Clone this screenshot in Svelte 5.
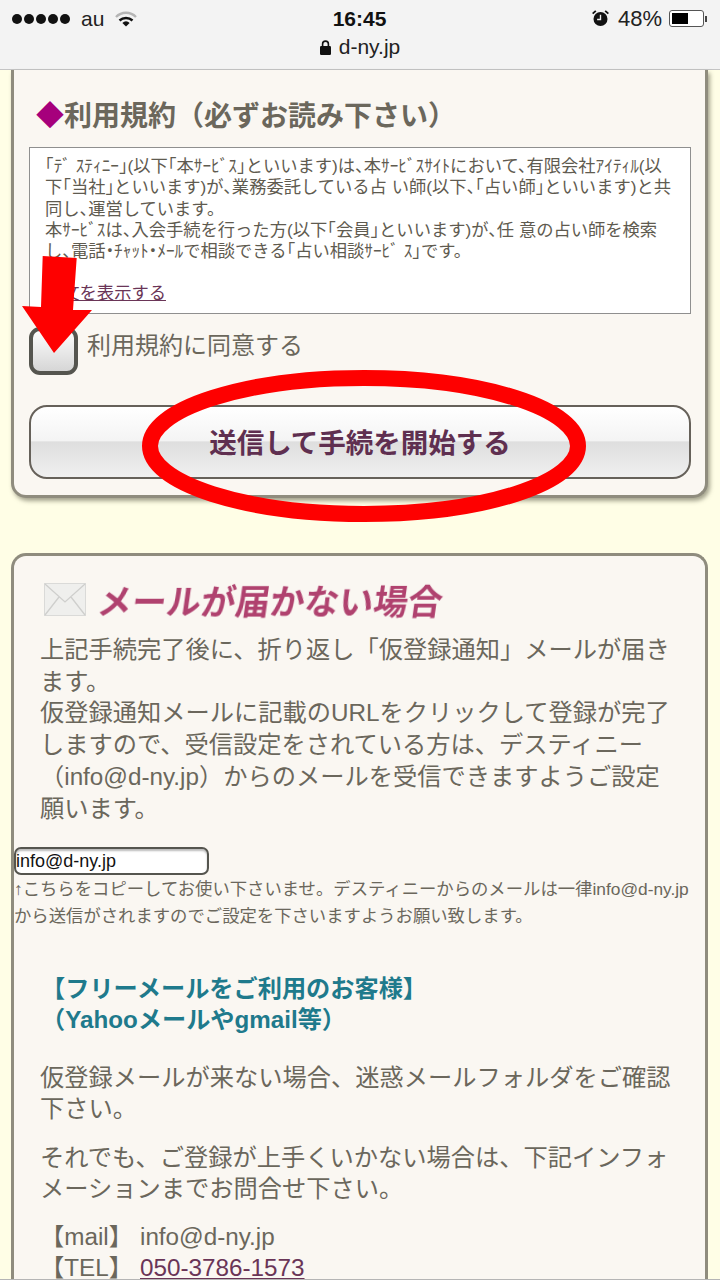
<script>
  const terms = [
    '「ﾃﾞ ｽﾃｨﾆｰ」(以下「本ｻｰﾋﾞｽ」といいます)は、本ｻｰﾋﾞｽｻｲﾄにおいて、有限会社ｱｲﾃｨﾙ(以',
    '下「当社」といいます)が、業務委託している占 い師(以下、「占い師」といいます)と共',
    '同し、運営しています。',
    '本ｻｰﾋﾞｽは、入会手続を行った方(以下「会員」といいます)が、任 意の占い師を検索',
    'し、電話・ﾁｬｯﾄ・ﾒｰﾙで相談できる「占い相談ｻｰﾋﾞ ｽ」です。'
  ]
  const intro = [
    '上記手続完了後に、折り返し「仮登録通知」メールが届き',
    'ます。',
    '仮登録通知メールに記載のURLをクリックして登録が完了',
    'しますので、受信設定をされている方は、デスティニー',
    '（info@d-ny.jp）からのメールを受信できますようご設定',
    '願います。'
  ]
</script>

<div class="screen">
  <header class="topbar">
    <div class="status">
      <div class="left">
        <span class="dots">{#each [1, 2, 3, 4, 5] as d}<i></i>{/each}</span>
        <span class="carrier">au</span>
        <svg class="wifi" width="22" height="16" viewBox="0 0 22 16">
          <path d="M1 6a14 14 0 0 1 20 0" fill="none" stroke="#b5b5b5" stroke-width="2.4" />
          <path d="M4.5 9.5a9.5 9.5 0 0 1 13 0" fill="none" stroke="#111" stroke-width="2.4" />
          <path d="M11 15.5l-3.6-3.6a5 5 0 0 1 7.2 0z" fill="#111" />
        </svg>
      </div>
      <span class="time">16:45</span>
      <div class="right">
        <svg width="17" height="17" viewBox="0 0 16 16">
          <circle cx="8" cy="8.5" r="6.6" fill="#111" />
          <path d="M8 4.5v4.4H4.8" fill="none" stroke="#eee" stroke-width="1.3" />
          <path d="M0.6 3.4l3-2.6M15.4 3.4l-3-2.6" stroke="#111" stroke-width="1.8" />
        </svg>
        <span class="pct">48%</span>
        <span class="battery"><b></b></span>
        <span class="nub"></span>
      </div>
    </div>
    <div class="url">
      <svg width="11" height="15" viewBox="0 0 11 15">
        <rect x="0" y="6" width="11" height="9" rx="1.2" fill="#111" />
        <path d="M2.6 6.5V4a2.9 2.9 0 0 1 5.8 0v2.5" fill="none" stroke="#111" stroke-width="1.6" />
      </svg>
      <span>d-ny.jp</span>
    </div>
  </header>

  <section class="card first">
    <h2 class="terms-title"><span class="diamond">◆</span>利用規約（必ずお読み下さい）</h2>
    <div class="terms-box">
      {#each terms as line}<div>{line}</div>{/each}
      <div class="blank"></div>
      <a href="#terms">全文を表示する</a>
    </div>
    <label class="agree">
      <span class="check"></span>
      <span class="agree-text">利用規約に同意する</span>
    </label>
    <button class="submit">送信して手続を開始する</button>
  </section>

  <section class="card second">
    <div class="mail-title">
      <svg width="42" height="33" viewBox="0 0 42 33">
        <rect x="0.5" y="0.5" width="41" height="32" fill="#efefed" stroke="#dadad8" />
        <path d="M1 1l20 18L41 1M1 32l14-18M41 32L27 14" fill="none" stroke="#cfcfcd" stroke-width="1.3" />
      </svg>
      <span>メールが届かない場合</span>
    </div>
    <div class="body-text intro">
      {#each intro as line}<div>{line}</div>{/each}
    </div>
    <div class="copy-field">info@d-ny.jp</div>
    <p class="copy-note">↑こちらをコピーしてお使い下さいませ。デスティニーからのメールは一律info@d-ny.jp<br />から送信がされますのでご設定を下さいますようお願い致します。</p>
    <h3 class="free-mail">【フリーメールをご利用のお客様】<br />（Yahooメールやgmail等）</h3>
    <p class="body-text para">仮登録メールが来ない場合、迷惑メールフォルダをご確認<br />下さい。</p>
    <p class="body-text para">それでも、ご登録が上手くいかない場合は、下記インフォ<br />メーションまでお問合せ下さい。</p>
    <div class="body-text contact">
      <span>【mail】</span><span>info@d-ny.jp</span>
      <span>【TEL】</span><a href="#tel">050-3786-1573</a>
    </div>
  </section>

  <div class="bottom-edge"></div>

  <!-- hand drawn annotations on top of the screenshot -->
  <svg class="marks" width="720" height="1280" viewBox="0 0 720 1280">
    <ellipse cx="364" cy="446" rx="214" ry="68" fill="none" stroke="#fe0000" stroke-width="16" />
    <path d="M42.7 256L76.7 258L73 310H92L54 353L22 306L41 307z" fill="#fe0000" />
  </svg>
</div>

<style>
  :global(body) {
    margin: 0;
    background: #fffee6;
  }

  .screen {
    position: relative;
    width: 720px;
    height: 1280px;
    overflow: hidden;
    background: #fffee6;
    font-family: "Liberation Sans", "Noto Sans CJK JP", sans-serif;
    color: #6b675c;
  }

  .topbar {
    height: 69px;
    background: #f3f3f3;
    border-bottom: 1px solid #c4c4c4;
    color: #111;
  }

  .status {
    display: grid;
    grid-template-columns: 1fr auto 1fr;
    align-items: center;
    height: 37px;
    padding: 0 13px 0 12px;
  }

  .left {
    display: flex;
    align-items: center;
  }

  .dots {
    display: flex;
    gap: 2px;
  }

  .dots i {
    width: 10px;
    height: 10px;
    border-radius: 50%;
    background: #111;
  }

  .carrier {
    margin-left: 11px;
    font-size: 21px;
    color: #222;
  }

  .wifi {
    margin-left: 11px;
  }

  .time {
    font-size: 21px;
    font-weight: 700;
  }

  .right {
    display: flex;
    align-items: center;
    justify-content: flex-end;
  }

  .pct {
    margin-left: 9px;
    font-size: 22px;
    color: #222;
  }

  .battery {
    display: block;
    width: 35px;
    height: 17px;
    margin-left: 7px;
    padding: 2px;
    box-sizing: border-box;
    border: 1px solid #555;
    border-radius: 3px;
    background: #fff;
  }

  .battery b {
    display: block;
    width: 16px;
    height: 100%;
    background: #000;
  }

  .nub {
    width: 2px;
    height: 6px;
    margin-left: 1px;
    background: #444;
  }

  .url {
    display: flex;
    align-items: center;
    justify-content: center;
    gap: 8px;
    height: 20px;
    font-size: 21px;
    color: #222;
  }

  .card {
    box-sizing: border-box;
    width: 697px;
    margin-left: 11px;
    border: 3px solid #8f8c7e;
    background: #faf7f2;
  }

  .first {
    height: 428px;
    padding: 0 14px 0 15px;
    border-top: 0;
    border-radius: 0 0 15px 15px;
    box-shadow: 2px 3px 4px rgba(90, 90, 70, 0.55);
  }

  .terms-title {
    margin: 0;
    padding: 28px 0 0 7px;
    height: 49px;
    font-size: 28px;
    line-height: 38px;
    font-weight: 700;
    color: #6b675c;
    white-space: nowrap;
  }

  .diamond {
    color: #a6007c;
  }

  .terms-box {
    box-sizing: border-box;
    height: 167px;
    padding: 8px 15px;
    border: 1px solid #8f8f8f;
    background: #fff;
    font-size: 17.3px;
    line-height: 21.25px;
    font-feature-settings: "halt";
    color: #5f5b50;
    white-space: nowrap;
  }

  .blank {
    height: 21px;
  }

  .terms-box a {
    display: block;
    color: #6a3557;
    text-decoration: underline;
  }

  .agree {
    display: flex;
    align-items: flex-start;
    gap: 9px;
    margin-top: 13px;
    font-size: 24px;
    color: #6b675c;
  }

  .agree-text {
    margin-top: 1px;
    line-height: 36px;
  }

  .check {
    box-sizing: border-box;
    width: 49px;
    height: 48px;
    border: 4px solid #55554f;
    border-radius: 11px;
    background: linear-gradient(#fdfdfd, #d6d6d6);
  }

  .submit {
    display: block;
    width: 100%;
    height: 74px;
    margin-top: 30px;
    padding: 0 0 2px;
    border: 2px solid #66615a;
    border-radius: 18px;
    background: linear-gradient(#ffffff 0%, #f4f4f4 48%, #dedede 50%, #f0f0f0 100%);
    font-family: inherit;
    font-size: 27.5px;
    font-weight: 700;
    color: #5f2f50;
    white-space: nowrap;
  }

  .second {
    height: 727px;
    margin-top: 55px;
    padding: 0 26px;
    border-bottom: 0;
    border-radius: 15px 15px 0 0;
  }

  .mail-title {
    display: flex;
    align-items: center;
    gap: 12px;
    height: 33px;
    margin-top: 27px;
    margin-left: 4px;
    font-size: 34.5px;
    font-weight: 700;
    color: #b0426f;
    white-space: nowrap;
  }

  .mail-title span {
    display: block;
    filter: blur(0.6px);
    transform: skewX(-8deg);
    transform-origin: left center;
  }

  .body-text {
    font-size: 24.25px;
    line-height: 31.7px;
    color: #6b675c;
    white-space: nowrap;
  }

  .intro {
    margin-top: 18px;
  }

  .copy-field {
    box-sizing: border-box;
    width: 195px;
    height: 28px;
    margin: 23px 0 0 -26px;
    border: 2px solid #55554f;
    border-radius: 7px;
    background: #fff;
    box-shadow: inset 0 2px 2px #bbb;
    font-size: 18px;
    line-height: 24px;
    color: #111;
  }

  .copy-note {
    margin: 1px 0 0 -26px;
    font-size: 17.35px;
    line-height: 27px;
    color: #6b675c;
    white-space: nowrap;
  }

  .free-mail {
    margin: 43px 0 0 1px;
    font-size: 24.2px;
    line-height: 31px;
    font-weight: 700;
    color: #1f7a8c;
    white-space: nowrap;
  }

  .para {
    margin: 0;
  }

  .free-mail + .para {
    margin-top: 26.5px;
  }

  .para + .para {
    margin-top: 16.5px;
  }

  .contact {
    display: grid;
    grid-template-columns: 100px auto;
    justify-content: start;
    row-gap: 7px;
    margin-top: 19.5px;
    line-height: 24px;
  }

  .contact a {
    color: #6a3557;
  }

  .bottom-edge {
    position: absolute;
    left: 0;
    right: 0;
    bottom: 0;
    height: 1px;
    background: #b5b5b5;
  }

  .marks {
    position: absolute;
    left: 0;
    top: 0;
    pointer-events: none;
  }
</style>
